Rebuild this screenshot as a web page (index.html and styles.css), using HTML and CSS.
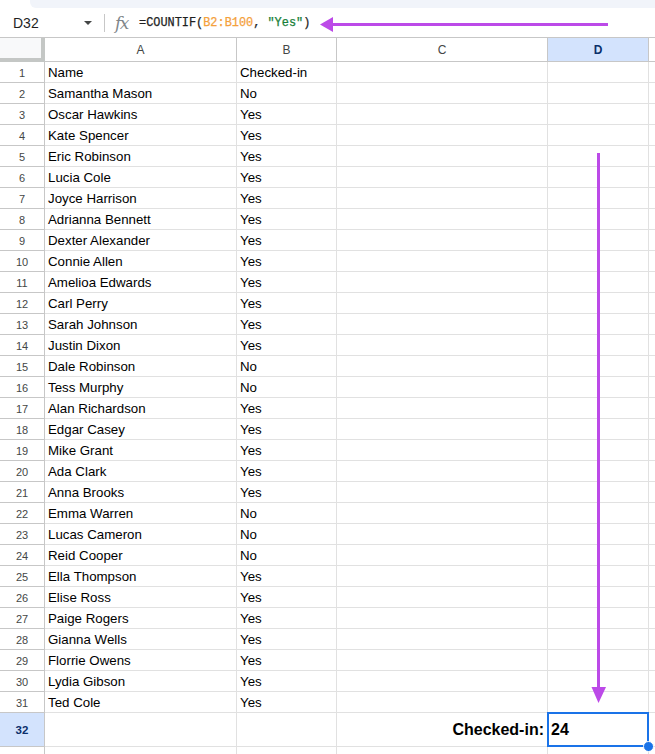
FILE: index.html
```html
<!DOCTYPE html>
<html>
<head>
<meta charset="utf-8">
<link rel="stylesheet" href="styles.css">
</head>
<body>
<div class="page">
  <div class="top-strip"></div>
  <div class="formula-bar">
    <div class="name-box">D32</div>
    <div class="caret"></div>
    <div class="fsep"></div>
    <div class="fx">fx</div>
    <div class="formula">=COUNTIF(<span class="rng">B2:B100</span>, <span class="str">"Yes"</span>)</div>
  </div>
  <div class="sheet">
    <div class="row head">
      <div class="c corner"></div>
      <div class="c ch">A</div>
      <div class="c ch">B</div>
      <div class="c ch">C</div>
      <div class="c ch sel">D</div>
      <div class="c ch"></div>
    </div>
    <div class="row"><div class="c rh">1</div><div class="c">Name</div><div class="c">Checked-in</div><div class="c"></div><div class="c"></div><div class="c"></div></div>
    <div class="row"><div class="c rh">2</div><div class="c">Samantha Mason</div><div class="c">No</div><div class="c"></div><div class="c"></div><div class="c"></div></div>
    <div class="row"><div class="c rh">3</div><div class="c">Oscar Hawkins</div><div class="c">Yes</div><div class="c"></div><div class="c"></div><div class="c"></div></div>
    <div class="row"><div class="c rh">4</div><div class="c">Kate Spencer</div><div class="c">Yes</div><div class="c"></div><div class="c"></div><div class="c"></div></div>
    <div class="row"><div class="c rh">5</div><div class="c">Eric Robinson</div><div class="c">Yes</div><div class="c"></div><div class="c"></div><div class="c"></div></div>
    <div class="row"><div class="c rh">6</div><div class="c">Lucia Cole</div><div class="c">Yes</div><div class="c"></div><div class="c"></div><div class="c"></div></div>
    <div class="row"><div class="c rh">7</div><div class="c">Joyce Harrison</div><div class="c">Yes</div><div class="c"></div><div class="c"></div><div class="c"></div></div>
    <div class="row"><div class="c rh">8</div><div class="c">Adrianna Bennett</div><div class="c">Yes</div><div class="c"></div><div class="c"></div><div class="c"></div></div>
    <div class="row"><div class="c rh">9</div><div class="c">Dexter Alexander</div><div class="c">Yes</div><div class="c"></div><div class="c"></div><div class="c"></div></div>
    <div class="row"><div class="c rh">10</div><div class="c">Connie Allen</div><div class="c">Yes</div><div class="c"></div><div class="c"></div><div class="c"></div></div>
    <div class="row"><div class="c rh">11</div><div class="c">Amelioa Edwards</div><div class="c">Yes</div><div class="c"></div><div class="c"></div><div class="c"></div></div>
    <div class="row"><div class="c rh">12</div><div class="c">Carl Perry</div><div class="c">Yes</div><div class="c"></div><div class="c"></div><div class="c"></div></div>
    <div class="row"><div class="c rh">13</div><div class="c">Sarah Johnson</div><div class="c">Yes</div><div class="c"></div><div class="c"></div><div class="c"></div></div>
    <div class="row"><div class="c rh">14</div><div class="c">Justin Dixon</div><div class="c">Yes</div><div class="c"></div><div class="c"></div><div class="c"></div></div>
    <div class="row"><div class="c rh">15</div><div class="c">Dale Robinson</div><div class="c">No</div><div class="c"></div><div class="c"></div><div class="c"></div></div>
    <div class="row"><div class="c rh">16</div><div class="c">Tess Murphy</div><div class="c">No</div><div class="c"></div><div class="c"></div><div class="c"></div></div>
    <div class="row"><div class="c rh">17</div><div class="c">Alan Richardson</div><div class="c">Yes</div><div class="c"></div><div class="c"></div><div class="c"></div></div>
    <div class="row"><div class="c rh">18</div><div class="c">Edgar Casey</div><div class="c">Yes</div><div class="c"></div><div class="c"></div><div class="c"></div></div>
    <div class="row"><div class="c rh">19</div><div class="c">Mike Grant</div><div class="c">Yes</div><div class="c"></div><div class="c"></div><div class="c"></div></div>
    <div class="row"><div class="c rh">20</div><div class="c">Ada Clark</div><div class="c">Yes</div><div class="c"></div><div class="c"></div><div class="c"></div></div>
    <div class="row"><div class="c rh">21</div><div class="c">Anna Brooks</div><div class="c">Yes</div><div class="c"></div><div class="c"></div><div class="c"></div></div>
    <div class="row"><div class="c rh">22</div><div class="c">Emma Warren</div><div class="c">No</div><div class="c"></div><div class="c"></div><div class="c"></div></div>
    <div class="row"><div class="c rh">23</div><div class="c">Lucas Cameron</div><div class="c">No</div><div class="c"></div><div class="c"></div><div class="c"></div></div>
    <div class="row"><div class="c rh">24</div><div class="c">Reid Cooper</div><div class="c">No</div><div class="c"></div><div class="c"></div><div class="c"></div></div>
    <div class="row"><div class="c rh">25</div><div class="c">Ella Thompson</div><div class="c">Yes</div><div class="c"></div><div class="c"></div><div class="c"></div></div>
    <div class="row"><div class="c rh">26</div><div class="c">Elise Ross</div><div class="c">Yes</div><div class="c"></div><div class="c"></div><div class="c"></div></div>
    <div class="row"><div class="c rh">27</div><div class="c">Paige Rogers</div><div class="c">Yes</div><div class="c"></div><div class="c"></div><div class="c"></div></div>
    <div class="row"><div class="c rh">28</div><div class="c">Gianna Wells</div><div class="c">Yes</div><div class="c"></div><div class="c"></div><div class="c"></div></div>
    <div class="row"><div class="c rh">29</div><div class="c">Florrie Owens</div><div class="c">Yes</div><div class="c"></div><div class="c"></div><div class="c"></div></div>
    <div class="row"><div class="c rh">30</div><div class="c">Lydia Gibson</div><div class="c">Yes</div><div class="c"></div><div class="c"></div><div class="c"></div></div>
    <div class="row"><div class="c rh">31</div><div class="c">Ted Cole</div><div class="c">Yes</div><div class="c"></div><div class="c"></div><div class="c"></div></div>
    <div class="row tall"><div class="c rh rsel">32</div><div class="c"></div><div class="c"></div><div class="c big right">Checked-in:</div><div class="c big active">24</div><div class="c"></div></div>
    <div class="row short"><div class="c rh"></div><div class="c"></div><div class="c"></div><div class="c"></div><div class="c"></div><div class="c"></div></div>
  </div>
  <svg class="arrows" width="655" height="754" viewBox="0 0 655 754">
    <rect x="331" y="23" width="277" height="3" fill="#bc4ae8"/>
    <polygon points="320,24.5 333,17 333,32" fill="#bc4ae8"/>
    <rect x="597" y="153" width="3" height="536" fill="#bc4ae8"/>
    <polygon points="598.5,703 591.5,687 606,687" fill="#bc4ae8"/>
  </svg>
</div>
</body>
</html>
```

FILE: styles.css
```css
* { box-sizing: border-box; }
html, body { margin: 0; padding: 0; background: #fff; }
body {
  font-family: "Liberation Sans", Arial, sans-serif;
  color: #000;
  overflow: hidden;
  width: 655px;
  height: 754px;
}
.page { position: relative; width: 655px; height: 754px; overflow: hidden; }

.top-strip {
  height: 8px;
  margin-left: 30px;
  background: #f1f4fa;
  border-bottom-left-radius: 6px;
}

.formula-bar {
  height: 29px;
  display: flex;
  align-items: center;
  position: relative;
}
.name-box {
  font-size: 14px;
  color: #1f1f1f;
  padding-left: 13px;
  width: 84px;
}
.caret {
  width: 0; height: 0;
  border-left: 4.5px solid transparent;
  border-right: 4.5px solid transparent;
  border-top: 4.5px solid #444746;
}
.fsep {
  width: 1px;
  height: 18px;
  background: #c7c7c7;
  margin-left: 12px;
}
.fx {
  font-family: "DejaVu Serif", "Liberation Serif", serif;
  font-style: italic;
  color: #80868b;
  font-size: 17px;
  margin-left: 10px;
  letter-spacing: -1.5px;
  width: 24px;
}
.formula {
  font-family: "Liberation Mono", "DejaVu Sans Mono", monospace;
  font-size: 11.9px;
  color: #1f1f1f;
  -webkit-text-stroke: 0.25px currentColor;
}
.rng { color: #f4a13c; }
.str { color: #188038; }

.sheet { border-top: 1px solid #c7c7c7; }
.row {
  display: grid;
  grid-template-columns: 45px 192px 100px 211px 101px 1fr;
  height: 21px;
}
.row.head { height: 24px; }
.row.tall { height: 34px; }
.row.short { height: 8px; }

.c {
  border-right: 1px solid #e1e1e1;
  border-bottom: 1px solid #e1e1e1;
  font-size: 13.3px;
  line-height: 20px;
  padding: 1px 3px 0;
  white-space: nowrap;
  overflow: hidden;
  display: flex;
  align-items: center;
  position: relative;
}
.head .c {
  border-right: 1px solid #c7c7c7;
  border-bottom: 1px solid #c7c7c7;
  justify-content: center;
  font-size: 12px;
  color: #444746;
  padding-top: 0;
}
.head .corner {
  background: #f8f9fa;
  border-right: 4px solid #c4c7c5;
  border-bottom: 4px solid #c4c7c5;
}
.head .sel {
  background: #d3e3fd;
  color: #0b2f6b;
  font-weight: bold;
}
.rh {
  justify-content: center;
  font-size: 11px;
  color: #444746;
  border-right: 1px solid #c7c7c7;
  border-bottom: 1px solid #c7c7c7;
}
.rh.rsel {
  background: #d3e3fd;
  color: #0b2f6b;
  font-weight: bold;
  font-size: 11.5px;
}
.big {
  font-size: 16px;
  font-weight: bold;
}
.right { justify-content: flex-end; padding-right: 3px; }
.active { overflow: visible; z-index: 5; }
.active::after {
  content: "";
  position: absolute;
  top: -1px; left: -1px; right: -1px; bottom: -1px;
  border: 2px solid #1a73e8;
}
.active::before {
  content: "";
  position: absolute;
  right: -5.5px;
  bottom: -5.5px;
  width: 9px;
  height: 9px;
  border-radius: 50%;
  background: #1a73e8;
  border: 1px solid #fff;
  z-index: 6;
}

.arrows {
  position: absolute;
  top: 0; left: 0;
  pointer-events: none;
  z-index: 10;
}
```
